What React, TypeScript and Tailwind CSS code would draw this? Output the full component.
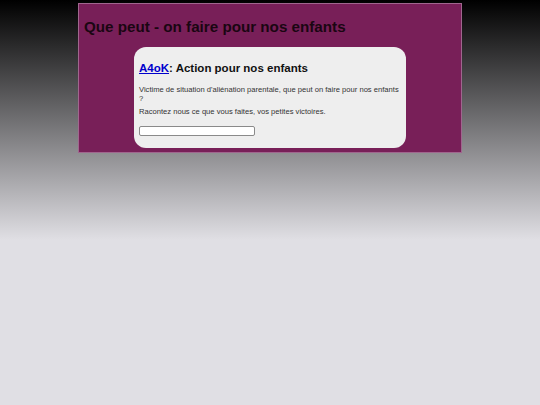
import React from "react";

export default function App() {
  return (
    <div
      className="min-h-[405px] w-full pt-[3px] bg-[#e0dfe4] bg-[linear-gradient(to_bottom,#000000_0px,#e0dfe4_240px)] bg-no-repeat bg-[length:100%_240px]"
      style={{ fontFamily: '"Liberation Sans", Arial, sans-serif' }}
    >
      <div className="mx-auto w-[384px] h-[150px] bg-[#781f58] border border-[#a0668e] flex flex-col">
        <h1 className="text-[15.2px] font-bold text-[#1a0612] pl-[5px] pt-[14px] leading-[18px]">
          Que peut - on faire pour nos enfants
        </h1>
        <div className="mx-auto mt-[11px] w-[272px] h-[101px] bg-[#eeeeee] rounded-[12px] px-[5px] pt-[14px]">
          <h2 className="text-[11.5px] font-bold text-[#111] leading-[14px]">
            <a href="#" className="text-[#0000cc] underline">A4oK</a>: Action pour nos enfants
          </h2>
          <p className="text-[7.6px] leading-[8.5px] text-[#333] mt-[11px]">
            Victime de situation d'aliénation parentale, que peut on faire pour nos enfants ?
          </p>
          <p className="text-[7.6px] leading-[8.5px] text-[#333] mt-[5px]">
            Racontez nous ce que vous faites, vos petites victoires.
          </p>
          <div className="mt-[9px] w-[116px] h-[10px] bg-white border border-[#8a8a8a] rounded-[2px]" />
        </div>
      </div>
    </div>
  );
}
